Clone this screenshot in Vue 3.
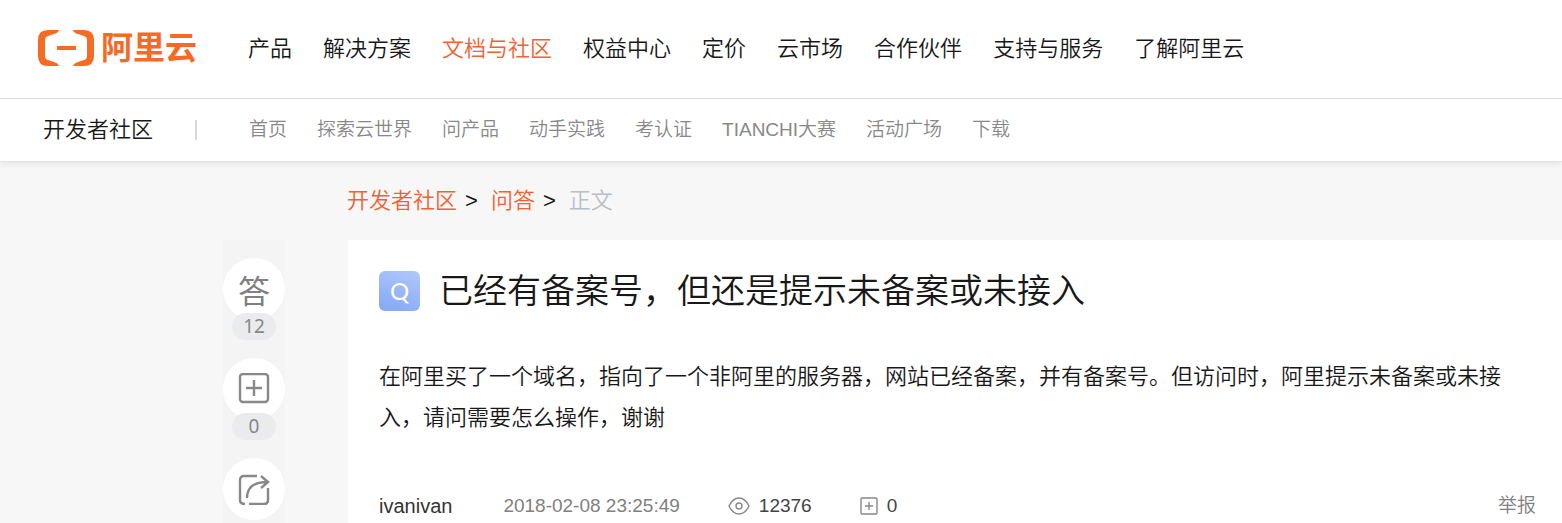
<template>
  <div class="page">
    <header>
      <nav class="main-nav">
        <a class="logo" href="#">
          <svg viewBox="0 0 56 36" width="56" height="36" aria-hidden="true">
            <path
              d="M21 0H10Q0 0 0 10V26Q0 36 10 36H21Q20 33 16 32L10 30Q7 29 7 26V10Q7 7 10 6L16 4Q20 3 21 0Z M35 0H46Q56 0 56 10V26Q56 36 46 36H35Q36 33 40 32L46 30Q49 29 49 26V10Q49 7 46 6L40 4Q36 3 35 0Z M19 16H38V20H19Z"
            />
          </svg>
          <span>阿里云</span>
        </a>
        <a
          v-for="item in mainNav"
          :key="item"
          href="#"
          :class="{ active: item === current }"
          >{{ item }}</a
        >
      </nav>
      <nav class="sub-nav">
        <a class="sub-title" href="#">开发者社区</a>
        <a v-for="item in subNav" :key="item" href="#">{{ item }}</a>
      </nav>
    </header>

    <div class="breadcrumb">
      <a href="#">开发者社区</a>
      <span class="sep">&gt;</span>
      <a href="#">问答</a>
      <span class="sep">&gt;</span>
      <span class="here">正文</span>
    </div>

    <div class="content">
      <aside>
        <div class="action">
          <button class="answer" aria-label="回答">答</button>
          <span class="badge">12</span>
        </div>
        <div class="action">
          <button aria-label="收藏" @click="toggleFavorite">
            <svg viewBox="0 0 32 32" width="32" height="32">
              <rect x="2" y="1" width="28" height="28" rx="3" />
              <path d="M16 7V23M8 15H24" />
            </svg>
          </button>
          <span class="badge">{{ favorites }}</span>
        </div>
        <div class="action">
          <button aria-label="分享">
            <svg viewBox="0 0 32 32" width="32" height="32">
              <path
                d="M19 3H6Q2 3 2 7V27Q2 31 7 31M11 31H26Q30 31 30 27V15M9 25Q9 9 29 9M23 3L30 9L23 15"
              />
            </svg>
          </button>
        </div>
      </aside>

      <main>
        <div class="title">
          <span class="q-icon">Q</span>
          <h1>已经有备案号，但还是提示未备案或未接入</h1>
        </div>
        <p>
          在阿里买了一个域名，指向了一个非阿里的服务器，网站已经备案，并有备案号。但访问时，阿里提示未备案或未接入，请问需要怎么操作，谢谢
        </p>
        <div class="meta">
          <a class="author" href="#">ivanivan</a>
          <span class="date">2018-02-08 23:25:49</span>
          <span class="count views">
            <svg viewBox="0 0 22 18" width="22" height="18" aria-hidden="true">
              <path d="M1 9Q5 1 11 1T21 9Q17 17 11 17T1 9Z" />
              <circle cx="11" cy="9" r="3" />
            </svg>
            12376
          </span>
          <span class="count">
            <svg viewBox="0 0 18 18" width="18" height="18" aria-hidden="true">
              <rect x="1" y="1" width="16" height="16" rx="1" />
              <path d="M9 5V13M5 9H13" />
            </svg>
            {{ favorites }}
          </span>
          <a class="report" href="#">举报</a>
        </div>
      </main>
    </div>
  </div>
</template>

<script setup>
import { ref } from "vue";

const current = "文档与社区";

const mainNav = [
  "产品",
  "解决方案",
  "文档与社区",
  "权益中心",
  "定价",
  "云市场",
  "合作伙伴",
  "支持与服务",
  "了解阿里云",
];

const subNav = [
  "首页",
  "探索云世界",
  "问产品",
  "动手实践",
  "考认证",
  "TIANCHI大赛",
  "活动广场",
  "下载",
];

const favorites = ref(0);

const toggleFavorite = () => {
  favorites.value = favorites.value === 0 ? 1 : 0;
};
</script>

<style>
body {
  margin: 0;
  background: #f7f7f7;
}
</style>

<style scoped>
.page {
  display: flex;
  flex-direction: column;
  min-height: 100vh;
  font-family: "Liberation Sans", "Noto Sans CJK SC", sans-serif;
  font-size: 22px;
  font-weight: 350;
  line-height: 20px;
  color: #181818;
}
a {
  color: inherit;
  text-decoration: none;
  white-space: nowrap;
}
header {
  background: #fff;
  border-bottom: 1px solid #e3e3e3;
  box-shadow: 0 2px 6px rgba(0, 0, 0, 0.08);
}
.main-nav {
  display: flex;
  align-items: center;
  gap: 31px;
  height: 98px;
  padding-left: 38px;
  border-bottom: 1px solid #d8d8d8;
}
.logo {
  display: flex;
  align-items: center;
  gap: 7px;
  margin-right: 20px;
  padding-bottom: 2px;
  color: #f56a24;
  font-size: 32px;
  font-weight: 700;
  line-height: 34px;
}
.logo svg {
  fill: #f56a24;
}
.active {
  color: #f5602f;
}
.sub-nav {
  display: flex;
  align-items: center;
  gap: 30px;
  height: 62px;
  padding-left: 43px;
  font-size: 19px;
  color: #888;
}
.sub-title {
  width: 152px;
  margin-right: 22px;
  border-right: 2px solid #d8d8d8;
  font-size: 22px;
  color: #181818;
}
.breadcrumb {
  display: flex;
  align-items: center;
  height: 78px;
  padding-left: 347px;
}
.breadcrumb a {
  color: #f5602f;
}
.sep {
  margin: 0 13px 0 8px;
}
.here {
  color: #b8bfc6;
}
.content {
  display: flex;
  flex: 1;
  padding-left: 223px;
}
aside {
  width: 62px;
  flex-shrink: 0;
  margin-right: 63px;
  padding-top: 18px;
  background: #f4f4f4;
}
.action {
  display: flex;
  flex-direction: column;
  align-items: center;
}
.action + .action {
  margin-top: 18px;
}
.action button {
  display: flex;
  align-items: center;
  justify-content: center;
  width: 62px;
  height: 62px;
  padding: 0;
  border: 0;
  border-radius: 50%;
  background: #fff;
  cursor: pointer;
}
.action .answer {
  font-family: "Noto Sans CJK SC", sans-serif;
  font-size: 32px;
  font-weight: 400;
  line-height: 32px;
  color: #808080;
}
.action svg {
  fill: none;
  stroke: #888;
  stroke-width: 2.4;
}
.badge {
  z-index: 1;
  width: 44px;
  height: 27px;
  margin-top: -7px;
  border-radius: 14px;
  background: #e9ebed;
  font-family: "Noto Sans", sans-serif;
  font-size: 19px;
  font-weight: 400;
  line-height: 27px;
  text-align: center;
  color: #888;
}
main {
  flex: 1;
  padding: 31px 26px 0 31px;
  background: #fff;
}
.title {
  display: flex;
  align-items: center;
  gap: 19px;
  height: 40px;
}
.q-icon {
  width: 41px;
  height: 40px;
  border-radius: 6px;
  background: linear-gradient(200deg, #b0c9fc, #84a6f6);
  font-family: Lato, sans-serif;
  font-size: 24px;
  font-weight: 400;
  line-height: 40px;
  text-align: center;
  color: #fff;
}
h1 {
  margin: 0;
  font-size: 34px;
  font-weight: 350;
  line-height: 40px;
}
p {
  margin: 45px 30px 0 0;
  line-height: 41px;
}
.meta {
  display: flex;
  align-items: center;
  height: 28px;
  margin-top: 54px;
  font-size: 19px;
  color: #808080;
}
.author {
  margin-right: 51px;
  font-size: 20px;
  color: #333;
}
.date {
  margin-right: 48px;
}
.count {
  display: flex;
  align-items: center;
  gap: 9px;
  color: #444;
}
.views {
  margin-right: 48px;
}
.count svg {
  fill: none;
  stroke: #888;
  stroke-width: 1.4;
}
.report {
  margin-left: auto;
}
</style>
